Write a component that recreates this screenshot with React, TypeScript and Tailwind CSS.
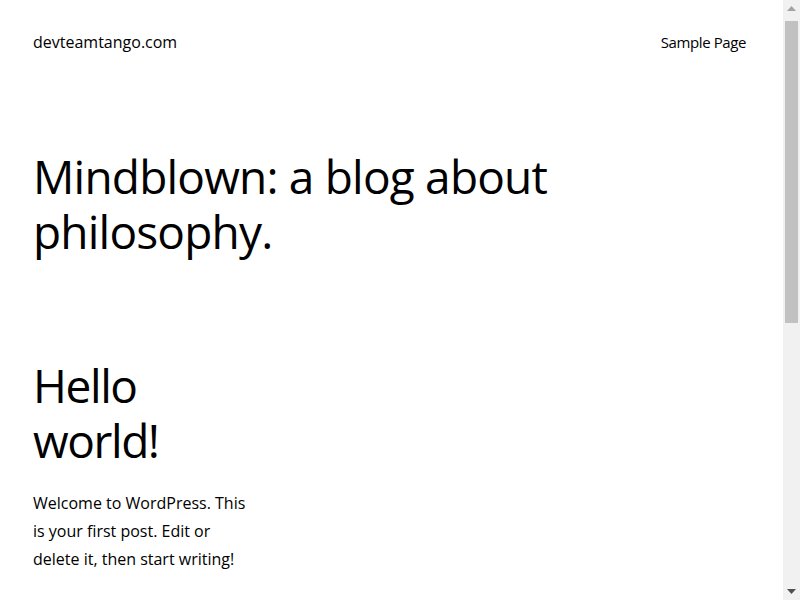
import React from "react";

function Scrollbar() {
  return (
    <div className="w-[17px] h-[600px] bg-[#f1f1f1] flex flex-col items-center shrink-0">
      <div className="h-[17px] w-full flex items-center justify-center">
        <svg width="9" height="5" viewBox="0 0 9 5">
          <polygon points="0,5 9,5 4.5,0" fill="#a3a3a3" />
        </svg>
      </div>
      <div className="mt-[4px] w-[13px] h-[302px] bg-[#c1c1c1]" />
      <div className="flex-1" />
      <div className="h-[17px] w-full flex items-center justify-center">
        <svg width="9" height="5" viewBox="0 0 9 5">
          <polygon points="0,0 9,0 4.5,5" fill="#505050" />
        </svg>
      </div>
    </div>
  );
}

export default function App() {
  return (
    <div className="flex h-[600px] overflow-hidden bg-white">
      <div
        className="flex-1 text-black overflow-hidden"
        style={{ fontFamily: '"Open Sans", "Noto Sans", sans-serif' }}
      >
        <header className="flex items-center justify-between pl-[33px] pr-[37px] pt-[30px]">
          <div className="text-[16px] leading-[24px]">devteamtango.com</div>
          <nav className="text-[15px] leading-[24px] tracking-[-0.4px]">Sample Page</nav>
        </header>
        <main className="px-[33px]">
          <h1 className="mt-[95px] text-[46px] leading-[55px] font-normal tracking-[-0.8px] w-[580px]">
            Mindblown: a blog about philosophy.
          </h1>
          <div className="mt-[99px] grid grid-cols-3 gap-6 w-[717px]">
            <article>
              <h2 className="text-[46px] leading-[55px] font-normal tracking-[-1.4px]">
                Hello world!
              </h2>
              <p className="mt-[21px] text-[16px] leading-[28px]">
                Welcome to WordPress. This is your first post. Edit or delete it, then start writing!
              </p>
            </article>
          </div>
        </main>
      </div>
      <Scrollbar />
    </div>
  );
}
